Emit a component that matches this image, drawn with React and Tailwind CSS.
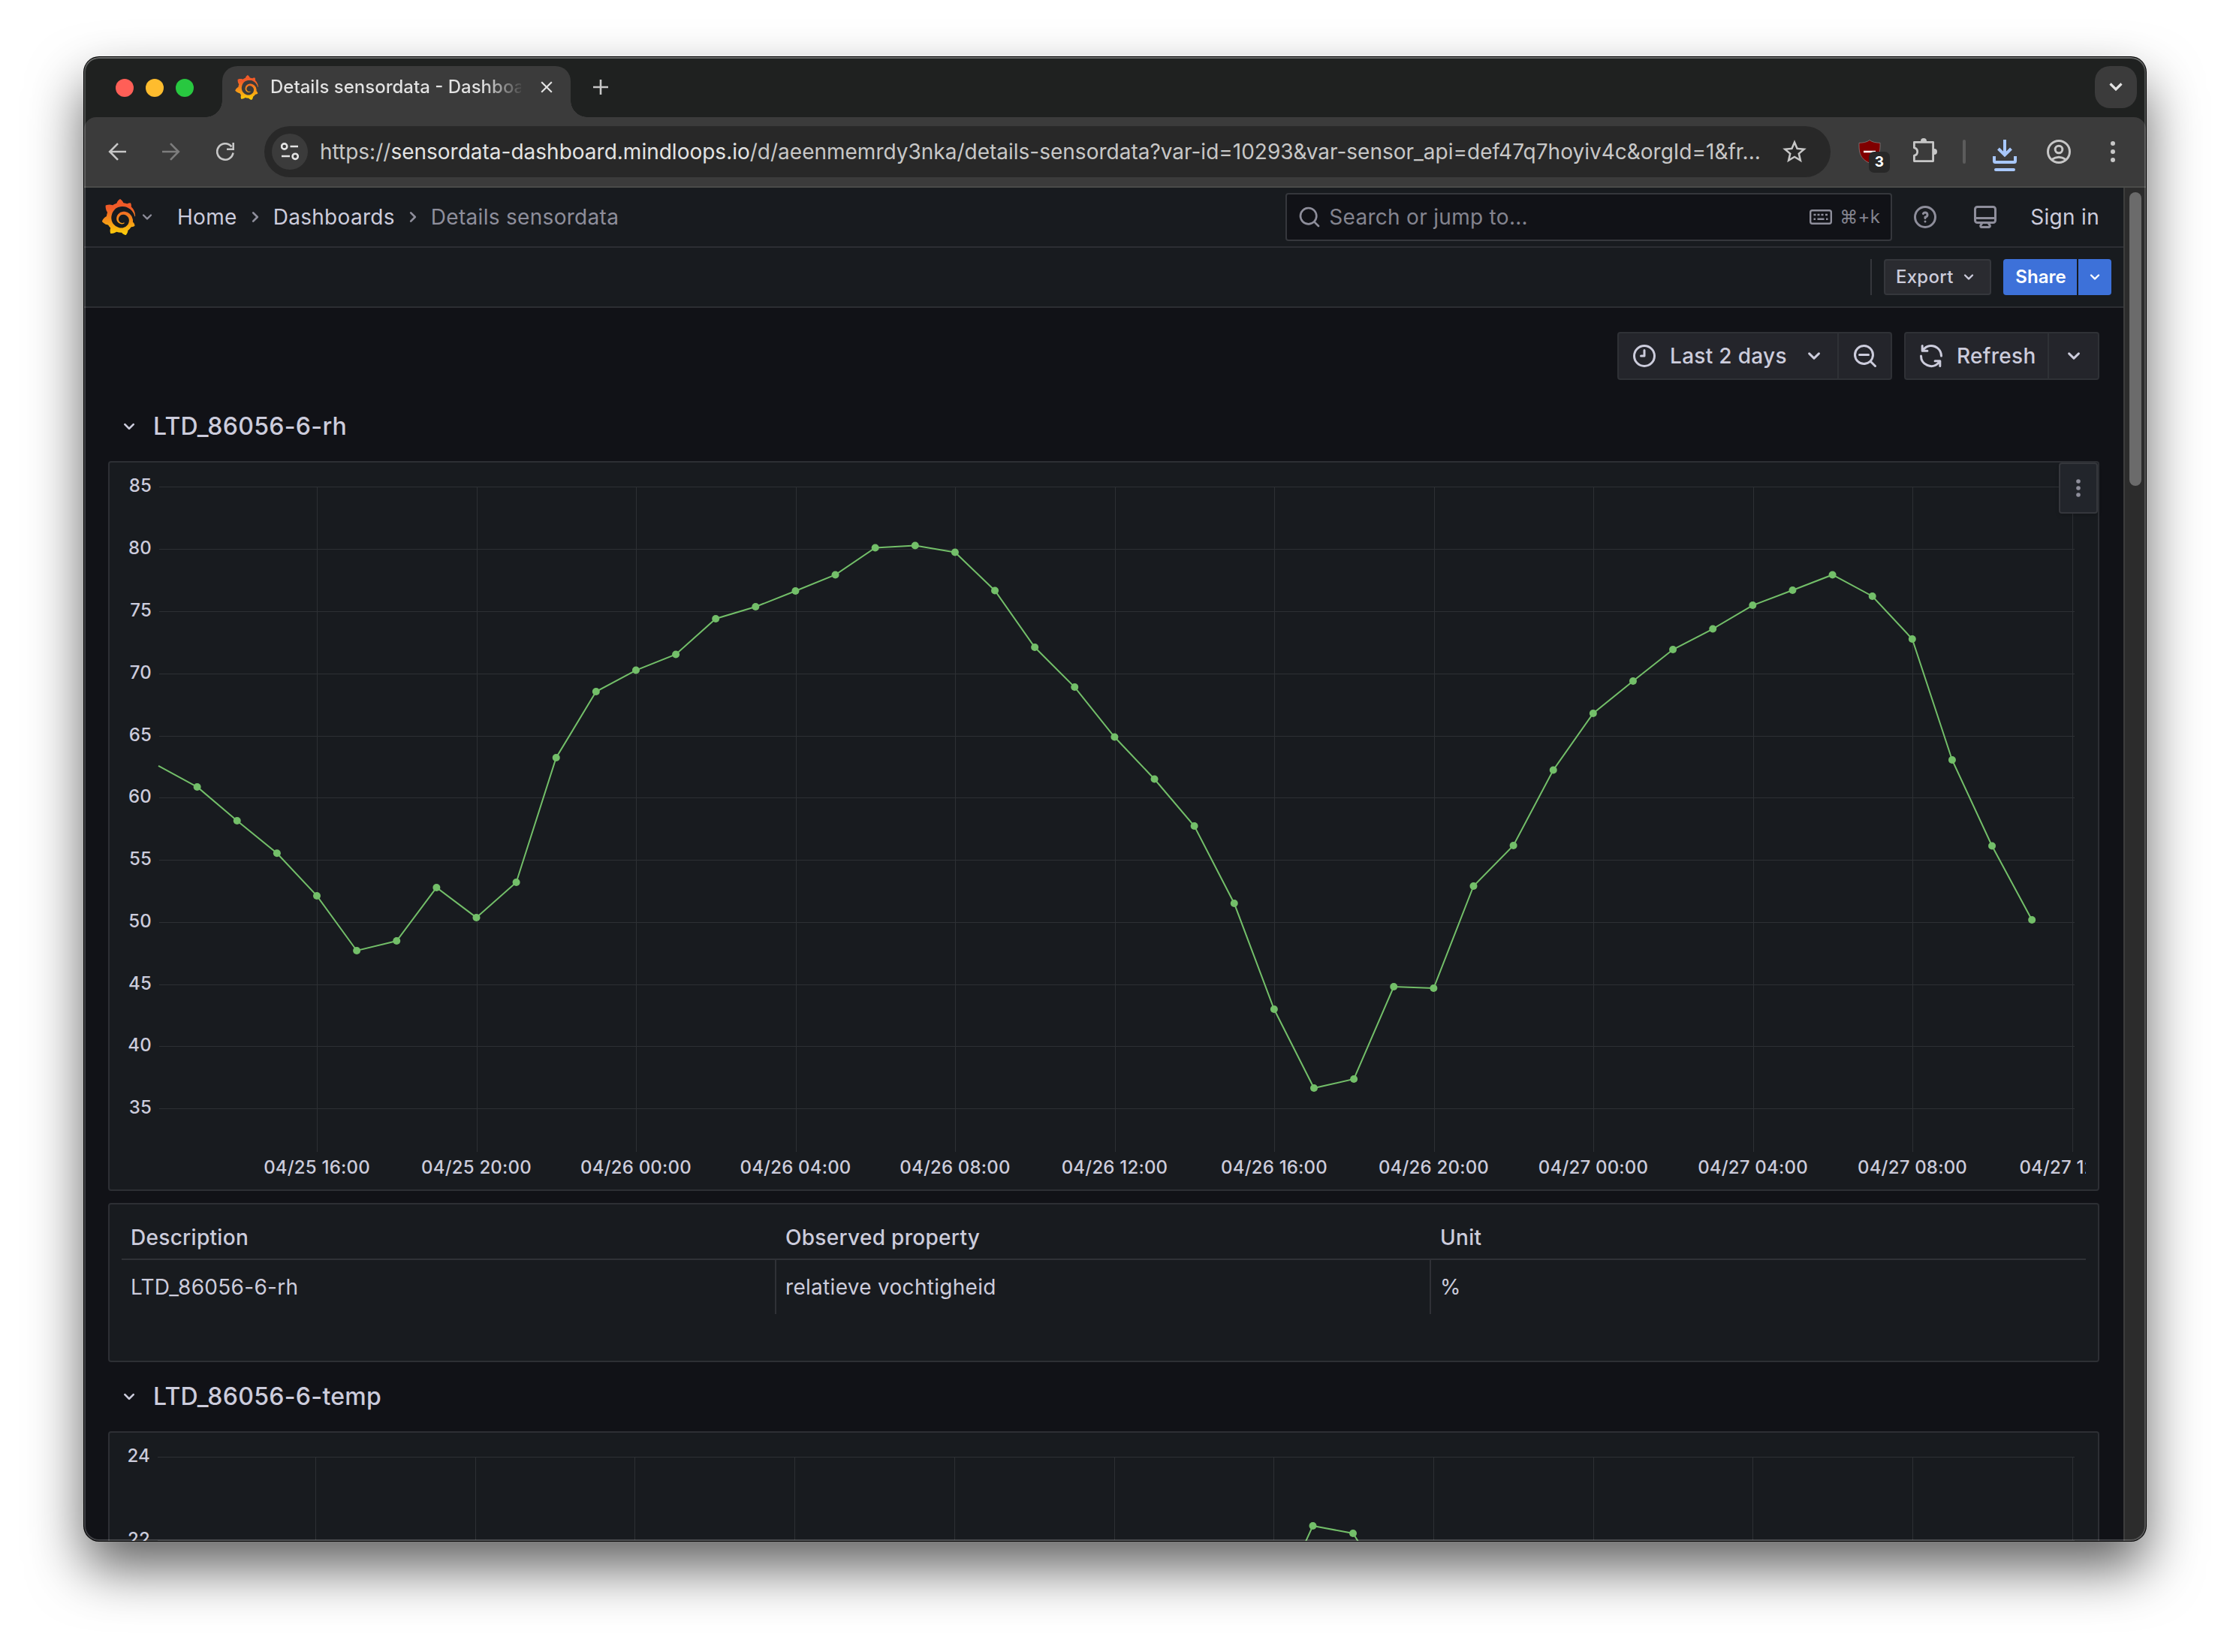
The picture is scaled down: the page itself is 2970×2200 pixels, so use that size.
import React from 'react';
import { SiGrafana } from 'react-icons/si';
import { MdStarBorder, MdClose } from 'react-icons/md';

const ICONS = {
  angleDown: 'M17,9.17a1,1,0,0,0-1.41,0L12,12.71,8.46,9.17a1,1,0,0,0-1.41,0,1,1,0,0,0,0,1.42l4.24,4.24a1,1,0,0,0,1.42,0L17,10.59A1,1,0,0,0,17,9.17Z',
  angleRight: 'M14.83,11.29,10.59,7.05a1,1,0,0,0-1.42,0,1,1,0,0,0,0,1.41L12.71,12,9.17,15.54a1,1,0,0,0,0,1.41,1,1,0,0,0,.71.29,1,1,0,0,0,.71-.29l4.24-4.24A1,1,0,0,0,14.83,11.29Z',
  search: 'M21.71,20.29,18,16.61A9,9,0,1,0,16.61,18l3.68,3.68a1,1,0,0,0,1.42,0A1,1,0,0,0,21.71,20.29ZM11,18a7,7,0,1,1,7-7A7,7,0,0,1,11,18Z',
  searchMinus: 'M21.71,20.29,18,16.61A9,9,0,1,0,16.61,18l3.68,3.68a1,1,0,0,0,1.42,0A1,1,0,0,0,21.71,20.29ZM11,18a7,7,0,1,1,7-7A7,7,0,0,1,11,18Zm4-8H7a1,1,0,0,0,0,2h8a1,1,0,0,0,0-2Z',
  clock: 'M12,2A10,10,0,1,0,22,12,10.01,10.01,0,0,0,12,2Zm0,18a8,8,0,1,1,8-8A8.01,8.01,0,0,1,12,20ZM12,6a1,1,0,0,0-1,1v4H9a1,1,0,0,0,0,2h3a1,1,0,0,0,1-1V7A1,1,0,0,0,12,6Z',
  sync: 'M19.91,15.51H15.38a1,1,0,0,0,0,2h2.4A8,8,0,0,1,4,12a1,1,0,1,0-2,0,10,10,0,0,0,16.88,7.23V21a1,1,0,0,0,2,0V16.5A1,1,0,0,0,19.91,15.51ZM12,2A10,10,0,0,0,5.12,4.77V3a1,1,0,0,0-2,0V7.5a1,1,0,0,0,1,1h4.5a1,1,0,0,0,0-2H6.22A8,8,0,0,1,20,12a1,1,0,0,0,2,0A10,10,0,0,0,12,2Z',
  help: 'M11.29,15.29a1.58,1.58,0,0,0-.12.15.76.76,0,0,0-.09.18.64.64,0,0,0-.06.18,1.36,1.36,0,0,0,0,.2.84.84,0,0,0,.08.38.9.9,0,0,0,.54.54.94.94,0,0,0,.76,0,.9.9,0,0,0,.54-.54A1,1,0,0,0,13,16a1,1,0,0,0-.29-.71A1,1,0,0,0,11.29,15.29ZM12,2A10,10,0,1,0,22,12,10,10,0,0,0,12,2Zm0,18a8,8,0,1,1,8-8A8,8,0,0,1,12,20ZM12,7A3,3,0,0,0,9.4,8.5a1,1,0,1,0,1.73,1A1,1,0,0,1,12,9a1,1,0,0,1,0,2,1,1,0,0,0-1,1v1a1,1,0,0,0,2,0v-.18A3,3,0,0,0,12,7Z',
  monitor: 'M19,2H5A3,3,0,0,0,2,5V15a3,3,0,0,0,3,3H7.64l-.58,1a2,2,0,0,0,0,2,2,2,0,0,0,1.75,1h6.46A2,2,0,0,0,17,21a2,2,0,0,0,0-2l-.59-1H19a3,3,0,0,0,3-3V5A3,3,0,0,0,19,2ZM8.77,20,10,18H14l1.2,2ZM20,15a1,1,0,0,1-1,1H5a1,1,0,0,1-1-1V14H20Zm0-3H4V5A1,1,0,0,1,5,4H19a1,1,0,0,1,1,1Z',
};

const Icon = ({ name, size = 32, className = '' }) => (
  <svg width={size} height={size} viewBox="0 0 24 24" fill="currentColor" className={`shrink-0 ${className}`}>
    <path d={ICONS[name]} />
  </svg>
);

const GrafanaLogo = ({ size, className = '' }) => (
  <span className={`relative shrink-0 ${className}`}>
    <svg width="0" height="0" className="absolute">
      <defs>
        <linearGradient id="grafana" x1="0" x2="0" y1="1.2" y2="0.25">
          <stop offset="0" stopColor="#fff100" />
          <stop offset="1" stopColor="#f05a28" />
        </linearGradient>
      </defs>
    </svg>
    <SiGrafana size={size} className="block fill-[url(#grafana)]" />
  </span>
);

// ---- browser chrome ----

const TabStrip = () => (
  <div className="flex h-20 shrink-0 items-start bg-[#1f2120] pl-[42px] pr-3 pt-3">
    <div className="flex gap-4 pt-[17px]">
      <span className="size-6 rounded-full bg-[#ff5f57]" />
      <span className="size-6 rounded-full bg-[#febc2e]" />
      <span className="size-6 rounded-full bg-[#28c840]" />
    </div>
    <div className="relative ml-[38px] flex h-[68px] w-[464px] items-center rounded-t-[20px] bg-[#3b3b3b] pb-3 pl-4 pr-[19px]">
      <span className="absolute bottom-0 -left-[22px] size-[22px] bg-[radial-gradient(circle_at_top_left,transparent_21.5px,#3b3b3b_22px)]" />
      <span className="absolute bottom-0 -right-[22px] size-[22px] bg-[radial-gradient(circle_at_top_right,transparent_21.5px,#3b3b3b_22px)]" />
      <GrafanaLogo size={33} />
      <span className="ml-[15px] w-[334px] overflow-hidden whitespace-nowrap bg-linear-to-r from-[#e3e3e3] from-85% to-[#e3e3e3]/10 bg-clip-text text-[24px] font-[450] text-transparent">
        Details sensordata - Dashboard
      </span>
      <MdClose size={26} className="ml-auto text-[#e3e3e3]" />
    </div>
    <svg width="20" height="20" className="ml-[30px] mt-[18px]" stroke="#c7c7c7" strokeWidth="2.6">
      <path d="M10 0v20M0 10h20" />
    </svg>
    <div className="ml-auto flex size-14 items-center justify-center rounded-[20px] bg-[#3b3b3b]">
      <svg width="18" height="12" fill="none" stroke="#e3e3e3" strokeWidth="3.2">
        <path d="M1.5 1.5L9 9l7.5-7.5" />
      </svg>
    </div>
  </div>
);

const AddressBar = () => (
  <div className="flex h-[68px] w-[2086px] items-center rounded-full bg-[#282828] pl-[10px] pr-[29px] text-[28px] text-[#c7c7c7]">
    <span className="flex size-12 items-center justify-center rounded-full bg-[#3b3b3b]">
      <svg width="24" height="24" fill="none" stroke="#e3e3e3" strokeWidth="2.6">
        <circle cx="4.7" cy="5" r="3.6" />
        <path d="M12.5 5H23M1 18h11" />
        <circle cx="19.2" cy="18.3" r="3.6" />
      </svg>
    </span>
    <span className="ml-4 whitespace-nowrap">
      https://<span className="text-[#e3e3e3]">sensordata-dashboard.mindloops.io</span>/d/aeenmemrdy3nka/details-sensordata?var-id=10293&amp;var-sensor_api=def47q7hoyiv4c&amp;orgId=1&amp;fr...
    </span>
    <MdStarBorder size={38} className="ml-auto" />
  </div>
);

const BrowserToolbar = () => (
  <div className="bg-[#1f2120]">
    <div className="flex h-[94px] items-center rounded-t-[16px] border-b-2 border-[#4a4b49] bg-[#3b3b3b] pl-8 pr-[41px]">
      <svg width="24" height="24" fill="none" stroke="#c7c7c7" strokeWidth="2.6">
        <path d="M24 12H2.5M13 1.2L2.2 12 13 22.8" />
      </svg>
      <svg width="24" height="24" fill="none" stroke="#7d7d7d" strokeWidth="2.6" className="ml-12">
        <path d="M0 12h21.5M11 1.2L21.8 12 11 22.8" />
      </svg>
      <svg width="24" height="24" fill="none" stroke="#c7c7c7" strokeWidth="2.6" className="ml-12">
        <path d="M22.5 13.5A10.7 10.7 0 1 1 20.4 5.4" />
        <path d="M22.7 0v8.7H14" />
      </svg>
      <div className="ml-10">
        <AddressBar />
      </div>
      <span className="relative ml-[37px]">
        <svg width="30" height="32" fill="#800000" stroke="#8a8a8a" strokeWidth="0.7">
          <path d="M15 .5C18 3.2 24 4.3 29 4.3 29.3 17 28 25 15 31.3 2 25 .7 17 1 4.3 6 4.3 12 3.2 15 .5Z" />
          <path d="M7 16h16" stroke="#fff" strokeWidth="2.6" />
        </svg>
        <span className="absolute left-[14px] top-4 flex size-7 items-center justify-center rounded-[7px] bg-[#282828] text-[19px] font-bold text-white">
          3
        </span>
      </span>
      <svg width="33" height="33" className="ml-[43px] -mt-1" fill="none" stroke="#c7c7c7" strokeWidth="2.8" strokeLinejoin="round">
        <path d="M1.4 5.4H26.6V30.6H1.4V23.2A5.3 5.3 0 0 0 1.4 12.8Z" />
        <path d="M10 4a4 4 0 0 1 8 0zM28 14a4 4 0 0 1 0 8z" fill="#c7c7c7" stroke="none" />
      </svg>
      <span className="ml-[33px] h-8 w-1 rounded-full bg-[#5c5c5c]" />
      <span className="ml-9 flex flex-col items-center gap-1.5 pt-2.5">
        <svg width="32" height="32" fill="none" stroke="#a8c7fa" strokeWidth="4">
          <path d="M16 0v20M7.5 12l8.5 8.5 8.5-8.5" />
          <path d="M2 22v6.5q0 1.5 1.5 1.5h25q1.5 0 1.5-1.5V22" />
        </svg>
        <span className="h-1 w-7 rounded-sm bg-[#a8c7fa]" />
      </span>
      <svg width="32" height="32" className="ml-10" fill="none" stroke="#c7c7c7" strokeWidth="3">
        <circle cx="16" cy="16" r="14.5" />
        <circle cx="16" cy="13" r="4.8" />
        <path d="M6.5 26.5Q16 20 25.5 26.5" />
      </svg>
      <svg width="6" height="28" className="ml-auto" fill="#c7c7c7">
        <circle cx="3" cy="3" r="3" />
        <circle cx="3" cy="14" r="3" />
        <circle cx="3" cy="25" r="3" />
      </svg>
    </div>
  </div>
);

// ---- grafana page ----

const TopNav = () => (
  <header className="flex h-20 shrink-0 items-center border-b-2 border-[#2c2e33] bg-[#181b1f] pl-[22px] pr-8 text-[28px] tracking-[0.3px] text-[#ccccdc]">
    <GrafanaLogo size={48} />
    <Icon name="angleDown" size={28} className="text-[#8e8e9b]" />
    <nav className="ml-[26px] flex items-center">
      <a>Home</a>
      <Icon name="angleRight" className="mx-2 text-[#8e8e9b]" />
      <a>Dashboards</a>
      <Icon name="angleRight" className="mx-2 text-[#8e8e9b]" />
      <span className="text-[#8e8e9b]">Details sensordata</span>
    </nav>
    <div className="ml-auto flex h-16 w-[808px] items-center rounded-[4px] border-2 border-[#35373c] bg-[#111217] px-[14px] text-[#84848f]">
      <Icon name="search" className="text-[#8e8e9b]" />
      <span className="ml-[10px]">Search or jump to...</span>
      <svg width="30" height="20" className="ml-auto" fill="none" stroke="#8e8e9b" strokeWidth="2.4">
        <rect x="1.2" y="1.2" width="27.6" height="17.6" rx="2.5" />
        <path d="M5.5 7h3M10.5 7h3M15.5 7h3M21 7h3M5.5 12.8h2.5M10.5 12.8h9M22 12.8h2.5" />
      </svg>
      <span className="ml-[10px] text-[24px]">⌘+k</span>
    </div>
    <Icon name="help" size={36} className="ml-[26px] text-[#8e8e9b]" />
    <Icon name="monitor" size={36} className="ml-11 text-[#8e8e9b]" />
    <span className="ml-[42px]">Sign in</span>
  </header>
);

const DashboardToolbar = () => (
  <div className="flex h-20 shrink-0 items-center justify-end border-b-2 border-[#2c2e33] bg-[#181b1f] pr-4 text-[24px] font-medium tracking-[0.26px]">
    <span className="h-12 w-0.5 bg-[#35373c]" />
    <button className="ml-4 flex h-12 w-[143px] items-center justify-between rounded-[4px] border-2 border-[#35373c] bg-[#2a2b30] px-[14px] text-[#ccccdc]">
      Export
      <Icon name="angleDown" size={28} />
    </button>
    <button className="ml-4 h-12 w-[98px] rounded-l-[4px] bg-[#3d71d9] pl-0.5 font-semibold tracking-normal text-white">Share</button>
    <button className="ml-0.5 flex h-12 w-11 items-center justify-center rounded-r-[4px] bg-[#3d71d9] text-white">
      <Icon name="angleDown" size={28} />
    </button>
  </div>
);

const TimeControls = () => (
  <div className="flex h-16 shrink-0 justify-end gap-4 text-[28px] font-medium tracking-[0.3px] text-[#ccccdc]">
    <div className="flex w-[366px] rounded-[4px] border-2 border-[#2f3136] bg-[#24252b]">
      <button className="flex flex-1 items-center pl-4">
        <Icon name="clock" size={36} />
        <span className="ml-4 whitespace-nowrap">Last 2 days</span>
        <Icon name="angleDown" size={36} className="ml-auto mr-[13px]" />
      </button>
      <button className="flex w-[71px] items-center justify-center border-l-2 border-[#2f3136]">
        <Icon name="searchMinus" size={36} />
      </button>
    </div>
    <div className="flex w-[260px] rounded-[4px] border-2 border-[#2f3136] bg-[#24252b]">
      <button className="flex flex-1 items-center pl-4">
        <Icon name="sync" size={36} />
        <span className="ml-4">Refresh</span>
      </button>
      <button className="flex w-[67px] items-center justify-center border-l-2 border-[#2f3136]">
        <Icon name="angleDown" size={36} />
      </button>
    </div>
  </div>
);

const RowTitle = ({ children }) => (
  <h2 className="flex items-center pl-3 text-[32px] font-medium tracking-[0.3px] text-[#ccccdc]">
    <Icon name="angleDown" />
    <span className="ml-4">{children}</span>
  </h2>
);

const Panel = ({ className = '', children }) => (
  <section className={`relative shrink-0 rounded-[4px] border-2 border-[#2d2f34] bg-[#181b1f] ${className}`}>{children}</section>
);

const HUMIDITY = [
  60.89, 58.17, 55.56, 52.14, 47.73, 48.51, 52.8, 50.39, 53.22, 63.24, 68.55, 70.27,
  71.54, 74.41, 75.37, 76.64, 77.94, 80.11, 80.29, 79.75, 76.67, 72.11, 68.91, 64.9,
  61.52, 57.75, 51.53, 43.02, 36.68, 37.41, 44.83, 44.71, 52.92, 56.18, 62.25, 66.8,
  69.4, 71.93, 73.59, 75.49, 76.7, 77.94, 76.22, 72.78, 63.06, 56.15, 50.2,
];

const X_LABELS = [
  '04/25 16:00', '04/25 20:00', '04/26 00:00', '04/26 04:00', '04/26 08:00', '04/26 12:00',
  '04/26 16:00', '04/26 20:00', '04/27 00:00', '04/27 04:00', '04/27 08:00', '04/27 12:00',
];

// origin of every chart is the top left corner inside the panel border
const Chart = ({ width, height, left, firstTick, tickStep, top, stepY, yLabels, bottom, labelY, points, lead }) => {
  const line = [...lead, ...points];
  return (
    <svg width={width} height={height} className="block overflow-hidden font-['Inter',sans-serif] text-[24px] font-[450] tracking-[0.2px]" fill="#ccccdc">
      <g fill="#2d3034">
        {yLabels.map((label, i) => (
          <rect key={label} x={left} y={Math.round(top + i * stepY)} width={2617 - left} height="1" />
        ))}
        {X_LABELS.map((label, i) => (
          <rect key={label} x={Math.round(firstTick + i * tickStep)} y={Math.round(top)} width="1" height={bottom - Math.round(top)} />
        ))}
      </g>
      {yLabels.map((label, i) => (
        <text key={label} x={left - 10} y={top + i * stepY + 7} textAnchor="end">{label}</text>
      ))}
      {X_LABELS.map((label, i) => (
        <text key={label} x={firstTick + i * tickStep} y={labelY} textAnchor="middle">{label}</text>
      ))}
      <polyline points={line.map((p) => p.join(',')).join(' ')} fill="none" stroke="#73bf69" strokeWidth="2" />
      {points.map(([x, y]) => (
        <circle key={x} cx={x} cy={y} r="5" fill="#73bf69" />
      ))}
    </svg>
  );
};

const HumidityChart = () => {
  const toY = (v) => 32.5 + ((85 - v) / 5) * 82.84;
  return (
    <Chart
      width={2632}
      height={968}
      left={66}
      firstTick={276}
      tickStep={212.5}
      top={32.4}
      stepY={82.78}
      bottom={918}
      labelY={947}
      yLabels={[85, 80, 75, 70, 65, 60, 55, 50, 45, 40, 35]}
      lead={[[65, toY(62.58)]]}
      points={HUMIDITY.map((v, i) => [276 + (i - 3) * 53.12, toY(v)])}
    />
  );
};

const TempChart = () => (
  <Chart
    width={2632}
    height={968}
    left={64}
    firstTick={274}
    tickStep={212.7}
    top={32}
    stepY={110.5}
    bottom={918}
    labelY={947}
    yLabels={[24, 22]}
    lead={[[1549.5, 240]]}
    points={[[1602.5, 124], [1656, 134], [1709, 217]]}
  />
);

const COLUMNS = [
  { title: 'Description', value: 'LTD_86056-6-rh' },
  { title: 'Observed property', value: 'relatieve vochtigheid' },
  { title: 'Unit', value: '%' },
];

const SensorTable = () => (
  <div className="px-4 text-[28px] tracking-[0.3px] text-[#ccccdc]">
    <div className="grid h-[74px] grid-cols-3 items-end border-b-2 border-[#2f3136] pb-[7px] font-medium">
      {COLUMNS.map((c) => (
        <span key={c.title} className="pl-3">{c.title}</span>
      ))}
    </div>
    <div className="grid h-[72px] grid-cols-3">
      {COLUMNS.map((c) => (
        <span key={c.title} className="flex items-center border-r-2 border-[#2f3136] pl-3 last:border-r-0">{c.value}</span>
      ))}
    </div>
  </div>
);

const App = () => (
  <div className="h-[2200px] w-[2970px] overflow-hidden bg-white pl-28 pt-[76px] font-['Inter',sans-serif]">
    <div className="relative flex h-[1976px] w-[2746px] flex-col overflow-hidden rounded-[20px] bg-[#111217] shadow-[0_0_0_1px_#000,0_36px_72px_rgba(0,0,0,0.62)]">
      <TabStrip />
      <BrowserToolbar />
      <div className="flex min-h-0 flex-1">
        <div className="flex w-[2716px] flex-col">
          <TopNav />
          <DashboardToolbar />
          <main className="flex min-h-0 flex-1 flex-col overflow-hidden px-8 pt-8">
            <TimeControls />
            <div className="flex h-[108px] shrink-0 items-center pt-4">
              <RowTitle>LTD_86056-6-rh</RowTitle>
            </div>
            <Panel className="h-[972px]">
              <HumidityChart />
              <button className="absolute right-0 top-0 flex h-[68px] w-[52px] items-center justify-center rounded-[4px] border-2 border-[#35373c] bg-[#22252b] shadow-md">
                <svg width="6" height="24" fill="#8e8e9b">
                  <circle cx="3" cy="3" r="2.8" />
                  <circle cx="3" cy="12" r="2.8" />
                  <circle cx="3" cy="21" r="2.8" />
                </svg>
              </button>
            </Panel>
            <Panel className="mt-4 h-[212px]">
              <SensorTable />
            </Panel>
            <div className="flex h-[92px] shrink-0 items-center">
              <RowTitle>LTD_86056-6-temp</RowTitle>
            </div>
            <Panel className="h-[972px]">
              <TempChart />
            </Panel>
          </main>
        </div>
        <div className="flex-1 border-l-2 border-[#3d3d3d] bg-[#2c2c2c] pl-1.5 pt-1.5">
          <div className="h-[391px] w-4 rounded-full bg-[#6b6b6b]" />
        </div>
      </div>
      {/* light rim of the window */}
      <div className="pointer-events-none absolute inset-0 rounded-[20px] shadow-[inset_0_0_0_2px_rgba(255,255,255,0.2),inset_0_2px_0_rgba(255,255,255,0.16)]" />
    </div>
  </div>
);

export default App;
